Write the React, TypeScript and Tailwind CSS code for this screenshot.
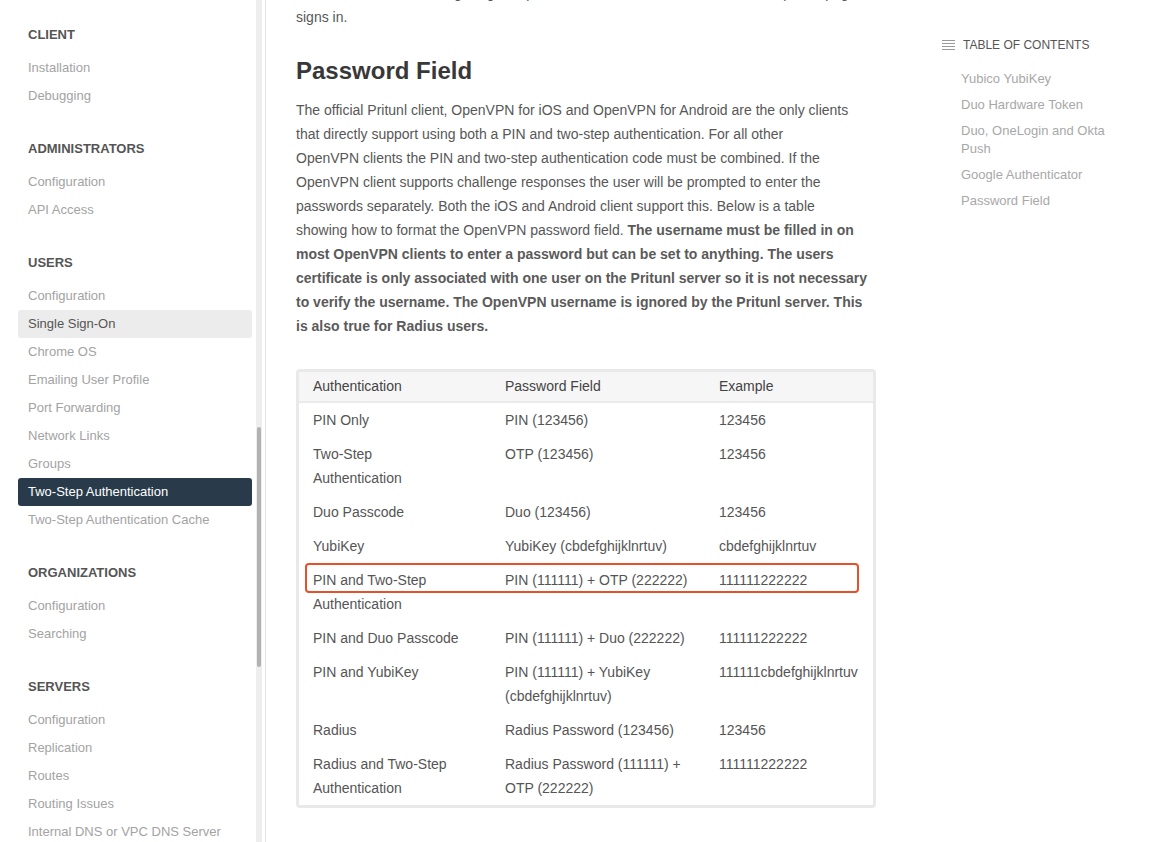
import React from "react";

const font = { fontFamily: '"Liberation Sans", Arial, sans-serif' };

type Item = { label: string; state?: "light" | "dark" };
const sections: { title: string; items: Item[] }[] = [
  { title: "CLIENT", items: [{ label: "Installation" }, { label: "Debugging" }] },
  { title: "ADMINISTRATORS", items: [{ label: "Configuration" }, { label: "API Access" }] },
  {
    title: "USERS",
    items: [
      { label: "Configuration" },
      { label: "Single Sign-On", state: "light" },
      { label: "Chrome OS" },
      { label: "Emailing User Profile" },
      { label: "Port Forwarding" },
      { label: "Network Links" },
      { label: "Groups" },
      { label: "Two-Step Authentication", state: "dark" },
      { label: "Two-Step Authentication Cache" },
    ],
  },
  { title: "ORGANIZATIONS", items: [{ label: "Configuration" }, { label: "Searching" }] },
  {
    title: "SERVERS",
    items: [
      { label: "Configuration" },
      { label: "Replication" },
      { label: "Routes" },
      { label: "Routing Issues" },
      { label: "Internal DNS or VPC DNS Server" },
    ],
  },
];

const rows: string[][][] = [
  [["PIN Only"], ["PIN (123456)"], ["123456"]],
  [["Two-Step", "Authentication"], ["OTP (123456)"], ["123456"]],
  [["Duo Passcode"], ["Duo (123456)"], ["123456"]],
  [["YubiKey"], ["YubiKey (cbdefghijklnrtuv)"], ["cbdefghijklnrtuv"]],
  [["PIN and Two-Step", "Authentication"], ["PIN (111111) + OTP (222222)"], ["111111222222"]],
  [["PIN and Duo Passcode"], ["PIN (111111) + Duo (222222)"], ["111111222222"]],
  [["PIN and YubiKey"], ["PIN (111111) + YubiKey", "(cbdefghijklnrtuv)"], ["111111cbdefghijklnrtuv"]],
  [["Radius"], ["Radius Password (123456)"], ["123456"]],
  [["Radius and Two-Step", "Authentication"], ["Radius Password (111111) +", "OTP (222222)"], ["111111222222"]],
];

function Cell({ lines }: { lines: string[] }) {
  return (
    <div className="pl-[14px] pr-[4px] py-[5px]">
      {lines.map((l, i) => (
        <div key={i} className="whitespace-nowrap leading-[24px]">
          {l}
        </div>
      ))}
    </div>
  );
}

export default function App() {
  return (
    <div style={font} className="flex h-[842px] w-[1160px] overflow-hidden bg-white">
      {/* Sidebar */}
      <div className="w-[256px] shrink-0 pl-[18px] pr-[4px] pt-[25px]">
        {sections.map((s) => (
          <div key={s.title} className="mb-[29px]">
            <div className="h-[20px] pl-[10px] text-[13px] font-semibold leading-[20px] text-[#555]">{s.title}</div>
            <div className="mt-[9px]">
              {s.items.map((it, i) => (
                <div
                  key={i}
                  className={
                    it.state === "dark"
                      ? "h-[28px] whitespace-nowrap rounded-[3px] bg-[#293b4b] pl-[10px] text-[13px] leading-[28px] text-white"
                      : it.state === "light"
                      ? "h-[28px] whitespace-nowrap rounded-[3px] bg-[#ececec] pl-[10px] text-[13px] leading-[28px] text-[#555]"
                      : "h-[28px] whitespace-nowrap pl-[10px] text-[13px] leading-[28px] text-[#a3a3a3]"
                  }
                >
                  {it.label}
                </div>
              ))}
            </div>
          </div>
        ))}
      </div>
      {/* Scrollbar track */}
      <div className="w-[6px] shrink-0 bg-[#eeeeee] pt-[427px]">
        <div className="mx-auto h-[240px] w-[4px] rounded-full bg-[#b2b2b2]" />
      </div>
      <div className="ml-[3px] w-px shrink-0 bg-[#e4e4e4]" />

      {/* Main */}
      <div className="ml-[30px] w-[580px] shrink-0 text-[14px] text-[#575757]">
        <p className="-mt-[19px] leading-[24px]">
          <span className="whitespace-nowrap">
            authenticated with the single sign-on provider the user will be redirected to the profile page when the user
          </span>
          <br />
          signs in.
        </p>
        <h2 className="mt-[26px] text-[24px] font-semibold leading-[32px] text-[#383838]">Password Field</h2>
        <p className="mt-[11px] whitespace-nowrap leading-[24px]">
          The official Pritunl client, OpenVPN for iOS and OpenVPN for Android are the only clients
          <br />
          that directly support using both a PIN and two-step authentication. For all other
          <br />
          OpenVPN clients the PIN and two-step authentication code must be combined. If the
          <br />
          OpenVPN client supports challenge responses the user will be prompted to enter the
          <br />
          passwords separately. Both the iOS and Android client support this. Below is a table
          <br />
          showing how to format the OpenVPN password field.{" "}
          <span className="font-semibold text-[#5a5a5a]">
            The username must be filled in on
            <br />
            most OpenVPN clients to enter a password but can be set to anything. The users
            <br />
            certificate is only associated with one user on the Pritunl server so it is not necessary
            <br />
            to verify the username. The OpenVPN username is ignored by the Pritunl server. This
            <br />
            is also true for Radius users.
          </span>
        </p>

        {/* Table */}
        <div className="relative mt-[31px] rounded-[4px] border-[3px] border-[#e9e9e9] text-[14px] text-[#555]">
          <div className="grid grid-cols-[192px_214px_1fr] border-b-2 border-[#ebebeb] bg-[#f6f6f6] text-[#444]">
            {["Authentication", "Password Field", "Example"].map((h) => (
              <div key={h} className="h-[29px] pl-[14px] leading-[29px]">
                {h}
              </div>
            ))}
          </div>
          {rows.map((r, i) => (
            <div key={i} className="grid grid-cols-[192px_214px_1fr]">
              <Cell lines={r[0]} />
              <Cell lines={r[1]} />
              <Cell lines={r[2]} />
            </div>
          ))}
          <div className="pointer-events-none absolute left-[6px] top-[191px] h-[30px] w-[554px] rounded-[4px] border-2 border-[#e4512b]" />
        </div>
      </div>

      {/* TOC */}
      <div className="ml-[66px] w-[168px] shrink-0 pt-[36px]">
        <div className="flex h-[18px] items-center">
          <svg width="14" height="11" viewBox="0 0 14 11" className="mr-[7px]">
            <g stroke="#9a9a9a" strokeWidth="1">
              <line x1="0" y1="0.5" x2="13" y2="0.5" />
              <line x1="0" y1="3.5" x2="13" y2="3.5" />
              <line x1="0" y1="6.5" x2="13" y2="6.5" />
              <line x1="0" y1="9.5" x2="13" y2="9.5" />
            </g>
          </svg>
          <span className="text-[12px] leading-[18px] text-[#555]">TABLE OF CONTENTS</span>
        </div>
        <div className="mt-[16px] pl-[19px] text-[13px] leading-[18px] text-[#a8a8a8]">
          {["Yubico YubiKey", "Duo Hardware Token", "Duo, OneLogin and Okta Push", "Google Authenticator", "Password Field"].map(
            (t) => (
              <div key={t} className="mb-[8px] w-[150px]">
                {t}
              </div>
            )
          )}
        </div>
      </div>
    </div>
  );
}
